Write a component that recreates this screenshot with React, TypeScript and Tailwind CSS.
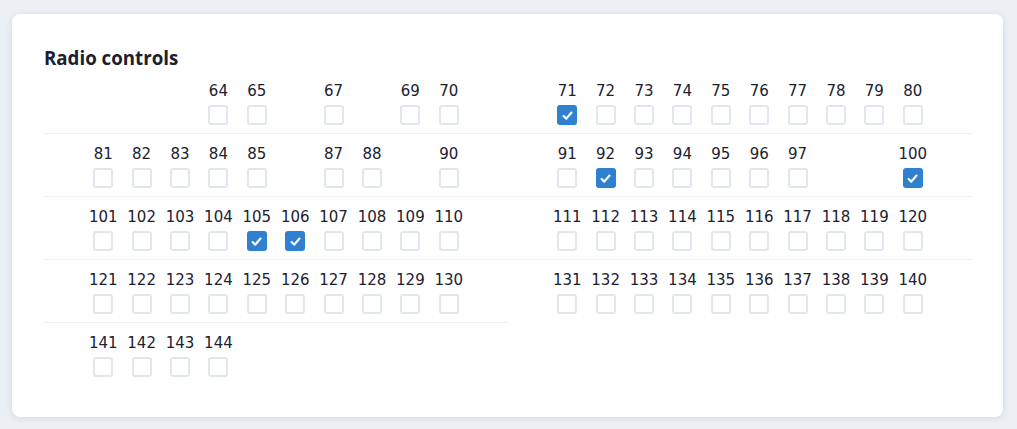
const left: number[][] = [
  [61, 62, 63, 64, 65, 66, 67, 68, 69, 70],
  [81, 82, 83, 84, 85, 86, 87, 88, 89, 90],
  [101, 102, 103, 104, 105, 106, 107, 108, 109, 110],
  [121, 122, 123, 124, 125, 126, 127, 128, 129, 130],
  [141, 142, 143, 144, 145, 146, 147, 148, 149, 150],
];

const right: number[][] = [
  [71, 72, 73, 74, 75, 76, 77, 78, 79, 80],
  [91, 92, 93, 94, 95, 96, 97, 98, 99, 100],
  [111, 112, 113, 114, 115, 116, 117, 118, 119, 120],
  [131, 132, 133, 134, 135, 136, 137, 138, 139, 140],
];

// cells that the screenshot leaves empty
const hidden = new Set([61, 62, 63, 66, 68, 86, 89, 98, 99, 145, 146, 147, 148, 149, 150]);
const checked = new Set([71, 92, 100, 105, 106]);

function Box({ on }: { on: boolean }) {
  if (on) {
    return (
      <span className="flex h-5 w-5 items-center justify-center rounded-[3px] bg-[#2f80d1]">
        <svg viewBox="0 0 12 12" className="h-[13px] w-[13px]">
          <path d="M2.4 6.5 L4.9 8.9 L9.7 3.3" fill="none" stroke="white" strokeWidth="2" strokeLinecap="round" strokeLinejoin="round" />
        </svg>
      </span>
    );
  }
  return <span className="block h-5 w-5 rounded-[3px] border-2 border-[#e1e7ef] bg-white" />;
}

function Cell({ n }: { n: number }) {
  if (hidden.has(n)) return <div className="w-[38.4px]" />;
  return (
    <div className="flex w-[38.4px] flex-col items-center">
      <span className="h-5 font-['DejaVu_Sans',Verdana,sans-serif] text-[15px] leading-5 text-[#1c2130]">{n}</span>
      <span className="mt-1">
        <Box on={checked.has(n)} />
      </span>
    </div>
  );
}

function Half({ rows }: { rows: number[][] }) {
  return (
    <div className="flex flex-col">
      {rows.map((row, i) => (
        <div
          key={i}
          className={
            i < rows.length - 1
              ? 'flex justify-center border-b border-[#edf0f4] pt-[10px] pb-2'
              : 'flex justify-center pt-[10px] pb-2'
          }
        >
          {row.map((n) => (
            <Cell key={n} n={n} />
          ))}
        </div>
      ))}
    </div>
  );
}

export default function App() {
  return (
    <div className="min-h-[429px] bg-[#ebf0f5] pt-[14px] pl-3">
      <section className="w-[991px] rounded-lg bg-white pt-8 pb-8 pl-8 pr-[31px] shadow-[0_1px_6px_rgba(30,45,70,0.12)]">
        <h2 className="mb-px h-6 font-['Open_Sans',sans-serif] text-[18.7px] leading-6 font-bold text-[#1b2030]">
          Radio controls
        </h2>
        <div className="grid grid-cols-2 items-start">
          <Half rows={left} />
          <Half rows={right} />
        </div>
      </section>
    </div>
  );
}
